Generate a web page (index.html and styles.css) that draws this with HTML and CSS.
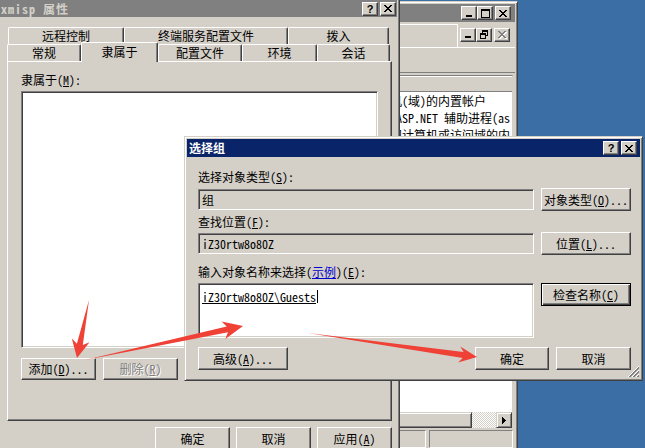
FILE: index.html
```html
<!DOCTYPE html>
<html lang="zh-CN">
<head>
  <meta charset="UTF-8">
  <title>选择组</title>
  <link rel="stylesheet" href="styles.css">
</head>
<body>
<div class="desktop">

  <!-- Computer management window, behind the property sheet -->
  <div class="win mmc">
    <div class="titlebar">
      <div class="caption-btns">
        <span class="cap-btn"><svg width="8" height="7" viewBox="0 0 8 7"><rect x="1" y="5" width="6" height="2"/></svg></span>
        <span class="cap-btn"><svg width="9" height="9" viewBox="0 0 9 9"><path fill-rule="evenodd" d="M0 0h9v9H0z M1 2v6h7V2z"/></svg></span>
        <span class="cap-btn gap"><svg width="8" height="7" viewBox="0 0 8 7"><path d="M0 0h2v1H0z M6 0h2v1H6z M1 1h2v1H1z M5 1h2v1H5z M2 2h4v1H2z M3 3h2v1H3z M2 4h4v1H2z M1 5h2v1H1z M5 5h2v1H5z M0 6h2v1H0z M6 6h2v1H6z"/></svg></span>
      </div>
    </div>
    <div class="mmc-menu">
      <div class="menu-band"></div>
      <div class="mdi-btns">
        <span class="cap-btn"><svg width="8" height="7" viewBox="0 0 8 7"><rect x="1" y="5" width="6" height="2"/></svg></span>
        <span class="cap-btn"><svg width="8" height="9" viewBox="0 0 8 9"><path d="M2 0h6v2H2z M7 2h1v4H7z M6 5h1v1H6z M2 2h1v1H2z M0 3h6v2H0z M0 5h1v4H0z M5 5h1v4H5z M0 8h6v1H0z"/></svg></span>
        <span class="cap-btn gap disabled"><svg width="8" height="7" viewBox="0 0 8 7"><path d="M0 0h2v1H0z M6 0h2v1H6z M1 1h2v1H1z M5 1h2v1H5z M2 2h4v1H2z M3 3h2v1H3z M2 4h4v1H2z M1 5h2v1H1z M5 5h2v1H5z M0 6h2v1H0z M6 6h2v1H6z"/></svg></span>
      </div>
    </div>
    <div class="mmc-toolbar"></div>
    <div class="mmc-list">
      <div class="list-header"></div>
      <div class="list-rows">
        <div class="list-row">管理计算机(域)的内置帐户</div>
        <div class="list-row">用于运行 ASP.NET 辅助进程(as</div>
        <div class="list-row">供来宾访问计算机或访问域的内</div>
      </div>
      <div class="hscroll">
        <span class="sb-thumb"></span>
        <span class="sb-track"></span>
        <span class="sb-arrow"><svg width="4" height="7" viewBox="0 0 4 7"><path d="M0 0h1v7H0z M1 1h1v5H1z M2 2h1v3H2z M3 3h1v1H3z"/></svg></span>
      </div>
    </div>
    <div class="statusbar">
      <span class="sb-panel wide"></span>
      <span class="sb-panel"></span>
    </div>
  </div>

  <!-- User property sheet -->
  <div class="win props">
    <div class="titlebar">
      <span class="title-text props-title">xmisp 属性</span>
      <div class="caption-btns">
        <span class="cap-btn help">?</span>
        <span class="cap-btn gap"><svg width="8" height="7" viewBox="0 0 8 7"><path d="M0 0h2v1H0z M6 0h2v1H6z M1 1h2v1H1z M5 1h2v1H5z M2 2h4v1H2z M3 3h2v1H3z M2 4h4v1H2z M1 5h2v1H1z M5 5h2v1H5z M0 6h2v1H0z M6 6h2v1H6z"/></svg></span>
      </div>
    </div>
    <div class="props-body">
      <div class="tabs-row back">
        <div class="tab">远程控制</div>
        <div class="tab">终端服务配置文件</div>
        <div class="tab">拨入</div>
      </div>
      <div class="tabs-row front">
        <div class="tab">常规</div>
        <div class="tab selected">隶属于</div>
        <div class="tab">配置文件</div>
        <div class="tab">环境</div>
        <div class="tab">会话</div>
      </div>
      <div class="tab-panel">
        <div class="label">隶属于(<u>M</u>):</div>
        <div class="listbox"></div>
        <div class="btn-row">
          <button class="btn">添加(<u>D</u>)...</button>
          <button class="btn" disabled>删除(<u>R</u>)</button>
        </div>
      </div>
      <div class="dlg-buttons">
        <button class="btn">确定</button>
        <button class="btn">取消</button>
        <button class="btn">应用(<u>A</u>)</button>
      </div>
    </div>
  </div>

  <!-- Select group dialog -->
  <div class="win pick">
    <div class="titlebar active">
      <span class="title-text">选择组</span>
      <div class="caption-btns">
        <span class="cap-btn help">?</span>
        <span class="cap-btn gap"><svg width="8" height="7" viewBox="0 0 8 7"><path d="M0 0h2v1H0z M6 0h2v1H6z M1 1h2v1H1z M5 1h2v1H5z M2 2h4v1H2z M3 3h2v1H3z M2 4h4v1H2z M1 5h2v1H1z M5 5h2v1H5z M0 6h2v1H0z M6 6h2v1H6z"/></svg></span>
      </div>
    </div>
    <div class="pick-body">
      <div class="label">选择对象类型(<u>S</u>):</div>
      <div class="field-row first">
        <div class="field readonly">组</div>
        <button class="btn wide">对象类型(<u>O</u>)...</button>
      </div>

      <div class="label second">查找位置(<u>F</u>):</div>
      <div class="field-row">
        <div class="field readonly">iZ30rtw8o80Z</div>
        <button class="btn wide">位置(<u>L</u>)...</button>
      </div>

      <div class="label third">输入对象名称来选择(<a class="link">示例</a>)(<u>E</u>):</div>
      <div class="field-row names">
        <div class="field memo"><span class="resolved">iZ30rtw8o80Z\Guests</span><span class="caret"></span></div>
        <button class="btn wide default">检查名称(<u>C</u>)</button>
      </div>

      <div class="pick-footer">
        <button class="btn wide">高级(<u>A</u>)...</button>
        <div class="footer-right">
          <button class="btn">确定</button>
          <button class="btn">取消</button>
        </div>
      </div>
    </div>
    <svg class="grip" width="12" height="12" viewBox="0 0 12 12">
      <path d="M11 0L0 11 M11 4L4 11 M11 8L8 11" stroke="#fff" stroke-width="1"/>
      <path d="M11 1L1 11 M11 2L2 11 M11 5L5 11 M11 6L6 11 M11 9L9 11 M11 10L10 11" stroke="#808080" stroke-width="1"/>
    </svg>
  </div>

  <!-- red annotation arrows -->
  <svg class="marks" width="645" height="448" viewBox="0 0 645 448">
    <polygon points="89,300 82.8,344.9 89.5,342.2 77,358 71.8,338.6 76.9,343.7"/>
    <polygon points="85,360 226.7,326.4 221.6,321.4 243,326 225.3,339 228,332.3"/>
    <polygon points="308,333 463.6,352.1 460.3,346.5 477,357 458.1,362.4 462.7,358"/>
  </svg>

</div>
</body>
</html>
```

FILE: styles.css
```css
* {
  box-sizing: border-box;
}

body {
  margin: 0;
  font-family: "Noto Sans Mono CJK SC", "Noto Sans CJK SC", sans-serif;
  font-size: 12px;
  line-height: 14px;
  color: #000;
}

.desktop {
  position: relative;
  width: 645px;
  height: 448px;
  overflow: hidden;
  background-color: #3a6ea5;
}

/* classic window frame */
.win {
  position: absolute;
  display: flex;
  flex-direction: column;
  background-color: #d4d0c8;
  border: 1px solid;
  border-color: #d4d0c8 #404040 #404040 #d4d0c8;
  box-shadow: inset 1px 1px #fff, inset -1px -1px #808080;
  padding: 2px;
}

.mmc {
  left: 300px;
  top: 1px;
  width: 218px;
  height: 470px;
  z-index: 1;
}

.props {
  left: -4px;
  top: -3px;
  width: 404px;
  height: 470px;
  z-index: 2;
}

.pick {
  left: 184px;
  top: 136px;
  width: 459px;
  height: 245px;
  z-index: 3;
}

.titlebar {
  display: flex;
  align-items: center;
  flex: none;
  height: 18px;
  padding: 0 4px 0 2px;
  background-color: #808080;
  color: #d4d0c8;
  font-weight: bold;
}

.props .titlebar {
  height: 17px;
  padding-right: 1px;
}

.titlebar.active {
  background-color: #0a246a;
  color: #fff;
  padding-right: 3px;
}

.props-title {
  letter-spacing: 1px;
}

.caption-btns {
  display: flex;
  margin-left: auto;
}

.cap-btn {
  display: flex;
  align-items: center;
  justify-content: center;
  width: 16px;
  height: 14px;
  background-color: #d4d0c8;
  border: 1px solid;
  border-color: #fff #404040 #404040 #fff;
  box-shadow: inset -1px -1px #808080;
  color: #000;
  fill: #000;
}

.cap-btn.gap {
  margin-left: 2px;
}

.cap-btn.help {
  font-family: "Liberation Sans", sans-serif;
  font-weight: bold;
  font-size: 11px;
  line-height: 12px;
}

.cap-btn.disabled svg {
  fill: #808080;
  filter: drop-shadow(1px 1px 0 #fff);
}

/* MMC window */
.mmc-menu {
  display: flex;
  align-items: center;
  height: 26px;
  border-bottom: 1px solid #fff;
}

.menu-band {
  flex: 1;
  align-self: stretch;
  margin-top: 2px;
  border-top: 1px solid #fff;
  border-right: 1px solid #fff;
}

.mdi-btns {
  display: flex;
  padding: 0 5px 0 2px;
}

.mmc-toolbar {
  height: 25px;
  border-bottom: 1px solid #808080;
}

.mmc-list {
  display: flex;
  flex-direction: column;
  height: 353px;
  margin-top: 2px;
  margin-right: 2px;
  background-color: #fff;
  border-top: 1px solid #808080;
  border-left: 1px solid #808080;
  border-right: 1px solid #d4d0c8;
}

.list-header {
  height: 16px;
  background-color: #d4d0c8;
  border-top: 1px solid #fff;
  border-bottom: 1px solid #808080;
}

.list-rows {
  flex: 1;
  padding-left: 38px;
  white-space: nowrap;
  overflow: hidden;
}

.list-row {
  height: 17px;
  line-height: 17px;
}

.hscroll {
  display: flex;
  height: 16px;
}

.sb-thumb,
.sb-arrow {
  background-color: #d4d0c8;
  border: 1px solid;
  border-color: #d4d0c8 #404040 #404040 #d4d0c8;
  box-shadow: inset 1px 1px #fff, inset -1px -1px #808080;
}

.sb-thumb {
  flex: 1;
}

.sb-track {
  width: 24px;
  background-image: repeating-conic-gradient(#fff 0 25%, #d4d0c8 0 50%);
  background-size: 2px 2px;
}

.sb-arrow {
  display: flex;
  align-items: center;
  justify-content: center;
  width: 16px;
}

.statusbar {
  display: flex;
  gap: 3px;
  height: 18px;
  margin-top: 2px;
  margin-right: 2px;
}

.sb-panel {
  width: 84px;
  border: 1px solid;
  border-color: #808080 #fff #fff #808080;
}

.sb-panel.wide {
  flex: 1;
}

/* property sheet */
.props-body {
  padding: 10px 5px 0 8px;
}

.tabs-row {
  display: flex;
  height: 17px;
}

.tabs-row.back {
  margin-left: 1px;
}

.tab {
  display: flex;
  align-items: center;
  justify-content: center;
  border-top: 1px solid #fff;
  border-left: 1px solid #fff;
  border-right: 1px solid #404040;
  border-radius: 2px 2px 0 0;
  box-shadow: inset -1px 0 #808080;
  background-color: #d4d0c8;
}

.back .tab:nth-child(1) { width: 116px; }
.back .tab:nth-child(2) { width: 164px; }
.back .tab:nth-child(3) { width: 101px; }

.front .tab:nth-child(1) { width: 74px; }
.front .tab:nth-child(2) { width: 77px; }
.front .tab:nth-child(3) { width: 84px; }
.front .tab:nth-child(4) { width: 75px; }
.front .tab:nth-child(5) { width: 73px; }

.tab.selected {
  position: relative;
  z-index: 1;
  height: 20px;
  margin-top: -2px;
  padding-bottom: 1px;
}

.tab-panel {
  height: 360px;
  border: 1px solid;
  border-color: #fff #404040 #404040 #fff;
  box-shadow: inset -1px -1px #808080;
  padding: 11px 13px 0 13px;
}

.listbox {
  height: 257px;
  margin-top: 4px;
  background-color: #fff;
  border: 1px solid;
  border-color: #808080 #fff #fff #808080;
  box-shadow: inset 1px 1px #404040, inset -1px -1px #d4d0c8;
}

.btn-row {
  display: flex;
  gap: 7px;
  margin-top: 10px;
}

.btn-row .btn {
  height: 22px;
}

.dlg-buttons {
  display: flex;
  justify-content: flex-end;
  gap: 6px;
  margin-top: 6px;
}

/* buttons */
.btn {
  width: 75px;
  height: 23px;
  padding: 0;
  font: inherit;
  color: #000;
  background-color: #d4d0c8;
  border: 1px solid;
  border-color: #fff #404040 #404040 #fff;
  box-shadow: inset -1px -1px #808080;
}

.btn.wide {
  width: 90px;
}

.btn.default {
  border-color: #000;
  box-shadow: inset 1px 1px #fff, inset -1px -1px #404040, inset -2px -2px #808080;
}

.btn:disabled {
  color: #808080;
  text-shadow: 1px 1px 0 #fff;
}

/* select group dialog */
.pick-body {
  padding: 13px 9px 0 11px;
}

.label.second {
  margin-top: 4px;
}

.label.third {
  margin-top: 10px;
}

.link {
  color: #0000cc;
  text-decoration: underline;
}

.field-row {
  display: flex;
  align-items: center;
  gap: 7px;
  margin-top: 3px;
}

.field-row.first {
  margin-top: 4px;
}

.field-row.names {
  align-items: flex-start;
  margin-top: 4px;
}

.field {
  flex: 1;
  display: flex;
  align-items: center;
  height: 21px;
  padding-left: 3px;
  border: 1px solid;
  border-color: #808080 #fff #fff #808080;
  box-shadow: inset 1px 1px #404040, inset -1px -1px #d4d0c8;
}

.field.memo {
  align-items: flex-start;
  height: 55px;
  padding-top: 6px;
  background-color: #fff;
}

.resolved {
  text-decoration: underline;
}

.caret {
  display: inline-block;
  width: 1px;
  height: 13px;
  margin-left: 1px;
  background-color: #000;
}

.pick-footer {
  display: flex;
  justify-content: space-between;
  margin-top: 9px;
}

.footer-right {
  display: flex;
  gap: 7px;
}

.footer-right .btn:first-child {
  width: 74px;
}

.grip {
  position: absolute;
  right: 2px;
  bottom: 2px;
}

.marks {
  position: absolute;
  left: 0;
  top: 0;
  z-index: 10;
  fill: #ef4136;
  pointer-events: none;
}
```
